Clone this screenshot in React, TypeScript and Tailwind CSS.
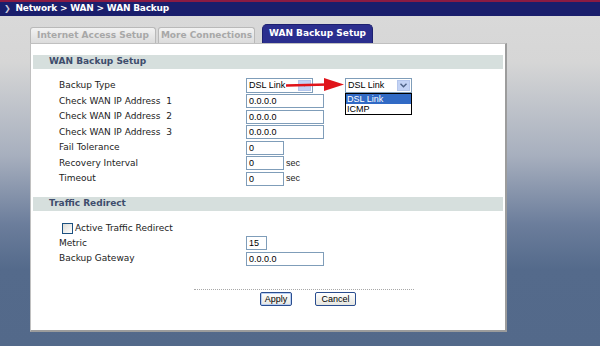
import React from 'react'

const ui = { fontFamily: '"DejaVu Sans", Verdana, sans-serif' }
const ctl = { fontFamily: '"Liberation Sans", Arial, sans-serif' }

function Field({ w, value }: { w: string; value: string }) {
  return (
    <div
      className={`${w} h-[14px] border border-[#7f9db9] bg-white pl-[2px] text-[9px] leading-[12px] text-black`}
      style={ctl}
    >
      {value}
    </div>
  )
}

function Select({ open }: { open?: boolean }) {
  return (
    <div
      className="w-[67px] h-[15px] border border-[#7f9db9] bg-white flex items-center justify-between pl-[2px] pr-[1px] text-[9px] text-black"
      style={ctl}
    >
      <span>DSL Link</span>
      <span className="w-[13px] h-[11px] bg-[#c3d3f5] border border-[#b5c6ec] flex items-center justify-center">
        <svg width="7" height="5" viewBox="0 0 7 5">
          {open ? (
            <path d="M0.5 0.8 L3.5 3.8 L6.5 0.8" stroke="#4d6185" strokeWidth="1.4" fill="none" />
          ) : (
            <path d="M1.5 1.5 L5.5 1.5 L3.5 3.5 Z" fill="#4d6185" />
          )}
        </svg>
      </span>
    </div>
  )
}

function Row({ label, children }: { label: string; children: React.ReactNode }) {
  return (
    <div className="flex items-center h-[15.5px]">
      <div className="w-[213px] pl-[26px] text-[9px] text-[#222] whitespace-pre" style={ui}>
        {label}
      </div>
      {children}
    </div>
  )
}

function SectionHead({ title }: { title: string }) {
  return (
    <div className="h-[14px] bg-[#d6dfdd] pl-[16px] flex items-center text-[9px] font-bold text-[#3e4d6c]" style={ui}>
      {title}
    </div>
  )
}

export default function App() {
  return (
    <div
      className="relative w-[600px] h-[346px] overflow-hidden bg-[linear-gradient(to_bottom,#dadada_0%,#d6d6d6_18%,#a7afbe_45%,#6b7d9b_65%,#546a8b_78%,#53698a_100%)]"
      style={ui}
    >
      {/* Header */}
      <div className="h-[16px] border-t-2 border-[#8b1b43] bg-[#1a1e6c] flex items-center pl-[4px] text-white text-[9px] tracking-[-0.2px] font-bold">
        <span className="text-[#c8c8d8] text-[8px] mr-[5px]">❯</span>
        Network &gt; WAN &gt; WAN Backup
      </div>

      <div className="pl-[30px] pt-[8px]">
        {/* Tabs */}
        <div className="flex items-end h-[19px]">
          <div className="w-[126px] h-[16px] rounded-t-[3px] border border-b-0 border-[#b9b9b9] bg-[linear-gradient(#f2f2f2,#dcdcdc)] flex items-center justify-center text-[9px] font-bold text-[#a8a8a8]">
            Internet Access Setup
          </div>
          <div className="ml-[2px] w-[97px] h-[16px] rounded-t-[3px] border border-b-0 border-[#b9b9b9] bg-[linear-gradient(#f2f2f2,#dcdcdc)] flex items-center justify-center text-[9px] font-bold text-[#a8a8a8]">
            More Connections
          </div>
          <div className="ml-[7px] w-[111px] h-[19px] rounded-t-[5px] bg-[#2b2e8e] border border-b-0 border-[#1d2070] flex items-center justify-center text-[9px] font-bold text-white">
            WAN Backup Setup
          </div>
        </div>

        {/* Panel */}
        <div className="w-[477px] h-[289px] bg-white border border-[#c0c0c0] border-r-2 border-b-2 border-r-[#9c9c9c] border-b-[#9c9c9c] px-[2px] pt-[11px]">
          <SectionHead title="WAN Backup Setup" />
          <div className="mt-[9px]">
            <Row label="Backup Type">
              <Select />
            </Row>
            <Row label="Check WAN IP Address  1">
              <Field w="w-[78px]" value="0.0.0.0" />
            </Row>
            <Row label="Check WAN IP Address  2">
              <Field w="w-[78px]" value="0.0.0.0" />
            </Row>
            <Row label="Check WAN IP Address  3">
              <Field w="w-[78px]" value="0.0.0.0" />
            </Row>
            <Row label="Fail Tolerance">
              <Field w="w-[38px]" value="0" />
            </Row>
            <Row label="Recovery Interval">
              <Field w="w-[38px]" value="0" />
              <span className="ml-[2px] text-[9px] text-[#222]" style={ctl}>sec</span>
            </Row>
            <Row label="Timeout">
              <Field w="w-[38px]" value="0" />
              <span className="ml-[2px] text-[9px] text-[#222]" style={ctl}>sec</span>
            </Row>
          </div>

          <div className="mt-[10px]">
            <SectionHead title="Traffic Redirect" />
          </div>
          <div className="mt-[11px]">
            <div className="flex items-center h-[14px] pl-[29px]">
              <span className="w-[11px] h-[11px] border border-[#1c5180] bg-[linear-gradient(135deg,#dcdcd7,#ffffff)]" />
              <span className="ml-[2px] text-[9px] text-[#222]">Active Traffic Redirect</span>
            </div>
            <Row label="Metric">
              <Field w="w-[21px]" value="15" />
            </Row>
            <Row label="Backup Gateway">
              <Field w="w-[78px]" value="0.0.0.0" />
            </Row>
          </div>

          {/* Footer buttons */}
          <div className="mt-[22px] ml-[161px] w-[220px] border-t border-dotted border-[#a8a8a8]" />
          <div className="flex mt-[2px]" style={ctl}>
            <button className="ml-[227px] w-[32px] h-[14px] rounded-[2px] border border-[#2a4d8f] bg-[linear-gradient(#ffffff,#e6e6e0)] text-[9px] leading-[12px] text-black shadow-[inset_0_0_0_1px_#b9cff3]">
              Apply
            </button>
            <button className="ml-[23px] w-[41px] h-[14px] rounded-[2px] border border-[#2a4d8f] bg-[linear-gradient(#ffffff,#e6e6e0)] text-[9px] leading-[12px] text-black">
              Cancel
            </button>
          </div>
        </div>
      </div>

      {/* Red arrow callout */}
      <svg className="absolute left-[284px] top-[76px]" width="62" height="18" viewBox="0 0 62 18">
        <path d="M2 9.5 L44 8.5" stroke="#e0141a" strokeWidth="2.4" />
        <path d="M40 2 L60 8.5 L40 15 Z" fill="#e0141a" />
      </svg>

      {/* Opened dropdown */}
      <div className="absolute left-[345px] top-[78px]">
        <Select open />
        <div className="w-[67px] border border-black bg-white text-[9px] leading-[10px]" style={ctl}>
          <div className="bg-[#316ac5] text-white pl-[1px]">DSL Link</div>
          <div className="text-black pl-[1px]">ICMP</div>
        </div>
      </div>
    </div>
  )
}
